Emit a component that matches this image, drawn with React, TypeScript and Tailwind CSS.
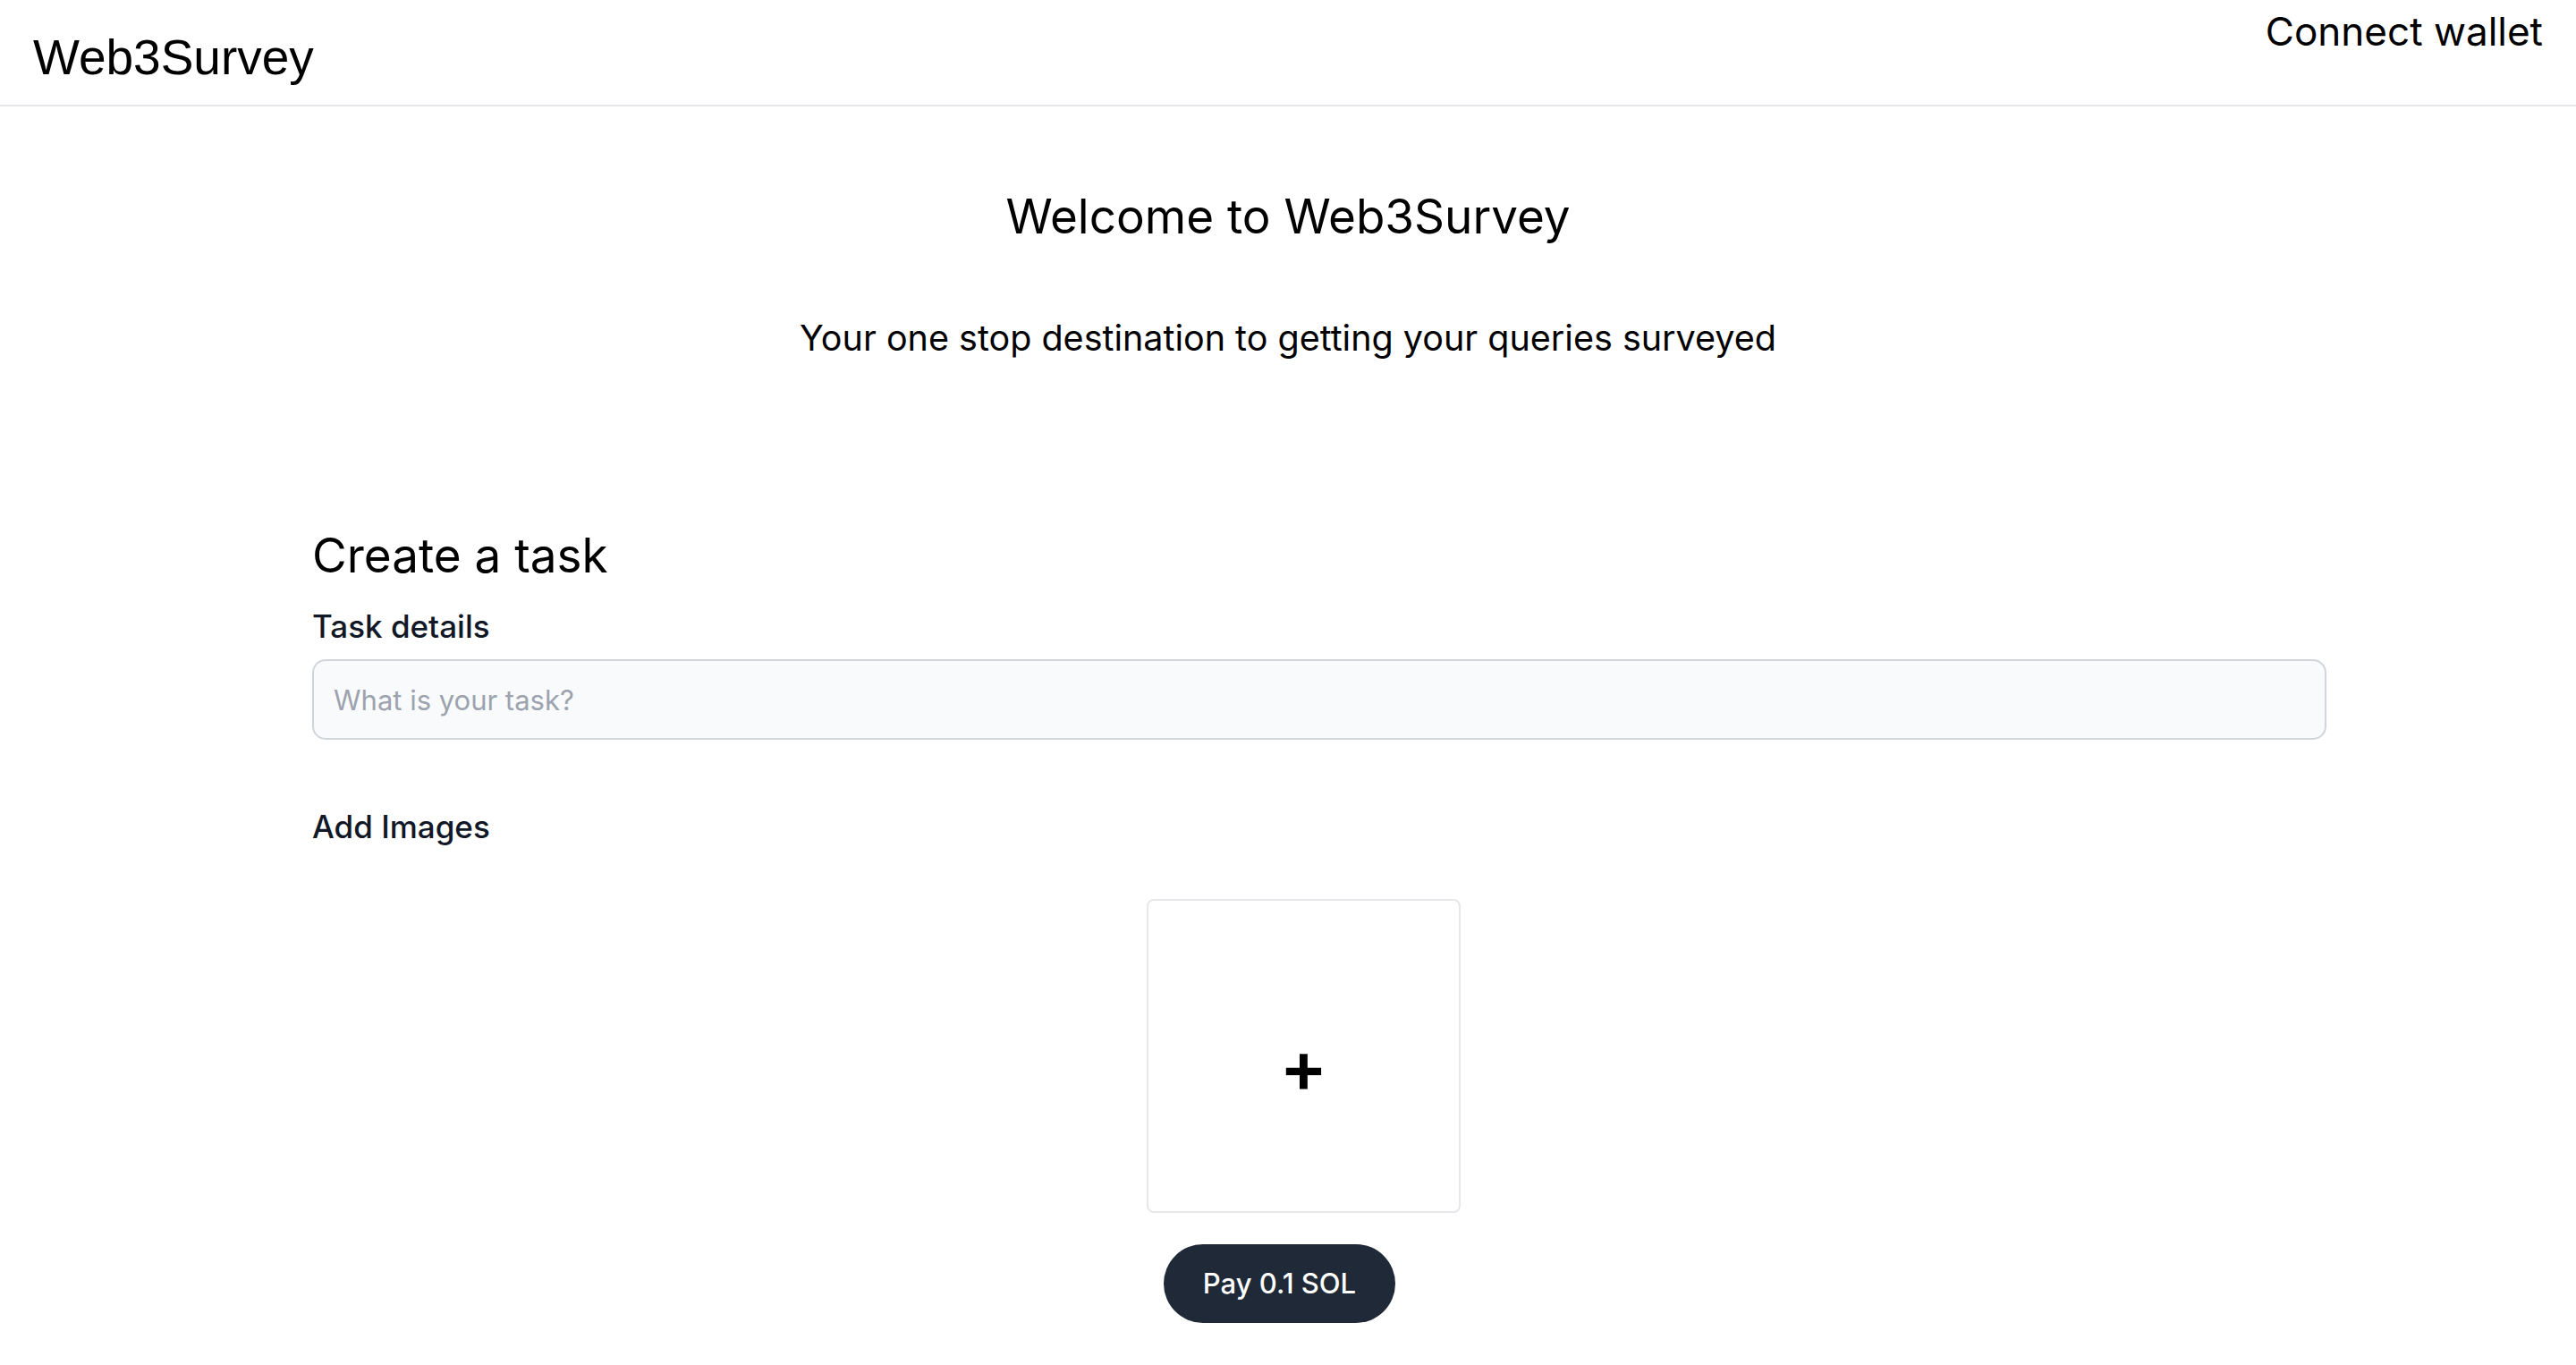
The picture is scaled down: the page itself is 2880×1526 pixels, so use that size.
import React from 'react';

const inter = "font-['Inter',sans-serif]";

export default function App() {
  return (
    <div className={`min-h-screen bg-white text-black ${inter}`}>
      <header className="flex justify-between items-start h-[119px] border-b-2 border-[#e5e7eb]">
        <div className="pl-[37px] pt-[37px] text-[55px] leading-[55px] font-['Liberation_Sans',Arial,sans-serif]">Web3Survey</div>
        <button className="pr-[37px] pt-[13px] text-[44px] leading-[44px] text-black">Connect wallet</button>
      </header>

      <main className="flex flex-col">
        <h1 className="mt-[90px] text-center text-[53px] leading-[66px]">Welcome to Web3Survey</h1>
        <p className="mt-[78px] text-center text-[39.5px] leading-[50px]">
          Your one stop destination to getting your queries surveyed
        </p>

        <div className="mt-[185px] ml-[349px] w-[2252px] flex flex-col">
          <h2 className="text-[53px] leading-[66px]">Create a task</h2>
          <label className="mt-[24px] text-[35px] leading-[44px] font-medium text-[#111827]">Task details</label>
          <input
            type="text"
            placeholder="What is your task?"
            className="mt-[15px] h-[90px] w-full rounded-[15px] border-2 border-[#d1d5db] bg-[#f9fafb] px-[22px] text-[31px] text-[#111827] placeholder:text-[#9ca3af] outline-none"
          />
          <label className="mt-[75px] text-[35px] leading-[44px] font-medium text-[#111827]">Add Images</label>
        </div>

        <div className="mt-[59px] flex justify-center pl-[35px]">
          <div className="w-[351px] h-[351px] border-2 border-[#e5e7eb] rounded-[8px] flex items-center justify-center">
            <span className="text-[80px] leading-none font-semibold pt-[22px]">+</span>
          </div>
        </div>

        <div className="mt-[35px] flex justify-center pr-[19px]">
          <button className="h-[88px] px-[44px] rounded-full bg-[#1f2937] text-white text-[31px] font-medium">
            Pay 0.1 SOL
          </button>
        </div>
      </main>
    </div>
  );
}
